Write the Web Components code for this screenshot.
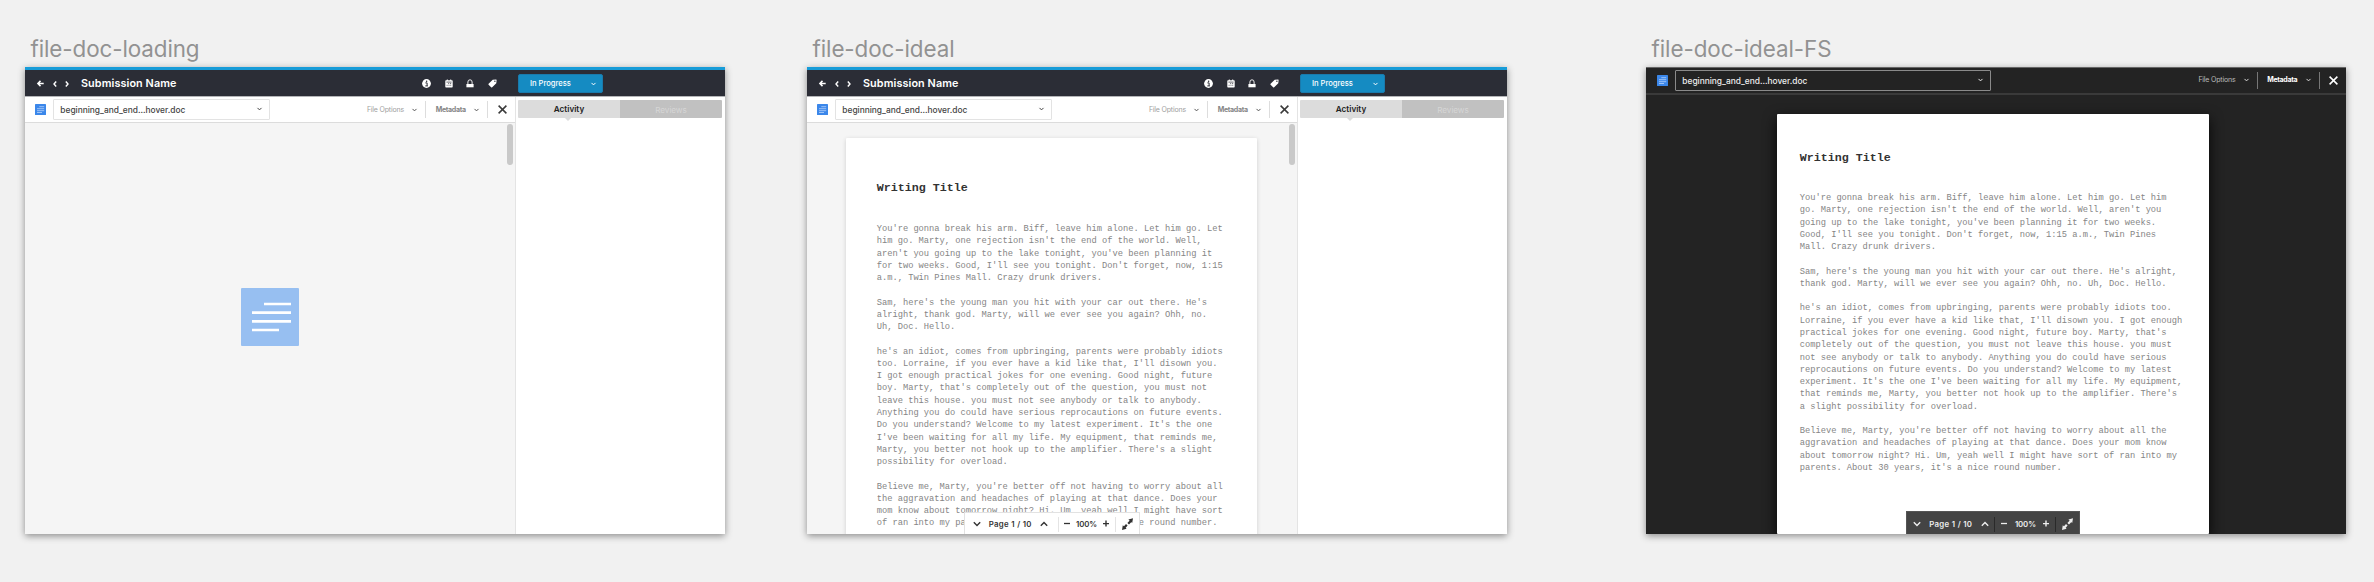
<!DOCTYPE html>
<html lang="en">
<head>
<meta charset="utf-8">
<title>File viewer artboards</title>
<style>
html,body{margin:0;height:100%}
body{background:#f1f1f1;overflow:hidden;font-family:Inter,"Liberation Sans",sans-serif}
</style>
</head>
<body>
<art-canvas>
  <art-board label="file-doc-loading" label-width="169"><file-view state="loading"></file-view></art-board>
  <art-board label="file-doc-ideal" label-width="142"><file-view state="ideal"></file-view></art-board>
  <art-board label="file-doc-ideal-FS" label-width="180"><fullscreen-view></fullscreen-view></art-board>
</art-canvas>
<script>
class Base extends HTMLElement {
  connectedCallback() {
    if (this.shadowRoot) return;
    this.attachShadow({mode: 'open'}).innerHTML = this.render();
    this.ready();
  }
  ready() {}
}

/* One line of text whose tracking is set so that it fills the given width. */
class FitText extends Base {
  render() {
    return `<style>:host{display:block;flex:none;white-space:pre;width:${this.getAttribute('w')}px}span{display:inline-block}</style><span><slot></slot></span>`;
  }
  ready() {
    const s = this.shadowRoot.querySelector('span');
    const n = this.textContent.length;
    const gap = (parseFloat(this.getAttribute('w')) - s.getBoundingClientRect().width) / n;
    s.style.letterSpacing = gap.toFixed(3) + 'px';
  }
}

const ICONS = {
  back: [7, 7, '<path d="M6.7 3.5H1M3.5 .9L.9 3.5l2.6 2.6" fill="none" stroke="currentColor" stroke-width="1.5"/>'],
  left: [4, 6, '<path d="M3.2 .5L1 3l2.2 2.5" fill="none" stroke="currentColor" stroke-width="1.4"/>'],
  right: [4, 6, '<path d="M.8 .5L3 3 .8 5.5" fill="none" stroke="currentColor" stroke-width="1.4"/>'],
  chev: [5, 4, '<path d="M.5 .9l2 2 2-2" fill="none" stroke="currentColor" stroke-width="1"/>'],
  down: [8, 6, '<path d="M.8 1.2L4 4.5l3.2-3.3" fill="none" stroke="currentColor" stroke-width="1.4"/>'],
  up: [8, 6, '<path d="M.8 4.8L4 1.5l3.2 3.3" fill="none" stroke="currentColor" stroke-width="1.4"/>'],
  close: [9, 9, '<path d="M.6 .6l7.8 7.8M8.4 .6L.6 8.4" fill="none" stroke="currentColor" stroke-width="1.5"/>'],
  minus: [6, 6, '<path d="M0 2.5h6" stroke="currentColor" stroke-width="1.3"/>'],
  plus: [6, 6, '<path d="M0 2.6h6M3 -.4v6" stroke="currentColor" stroke-width="1.4"/>'],
  info: [9, 9, '<circle cx="4.5" cy="4.5" r="4.4" fill="currentColor"/><path d="M3.4 3.9h1.7v2.9M3.3 6.9h2.6" fill="none" stroke="#2b2d36" stroke-width="1"/><circle cx="4.6" cy="2.3" r=".75" fill="#2b2d36"/>'],
  cal: [8, 9, '<path d="M1 1.3h.8V.4h1v.9h2.4V.4h1v.9H7q.7 0 .7.7v5.7q0 .8-.7.8H1q-.7 0-.7-.8V2q0-.7.7-.7z" fill="currentColor"/><path d="M1.4 3.1h5.2M3 4.6h.9M4.8 4.6h1.4M1.6 6.3h1M3.5 6.3h1M5.3 6.3h.9" stroke="#2b2d36" stroke-width=".7"/>'],
  lock: [8, 9, '<path d="M1.9 5V3a2 2.1 0 0 1 4.2 0v2" fill="none" stroke="currentColor" stroke-width=".9"/><path d="M.4 5h7.2v3.3H.4z" fill="currentColor"/>'],
  tag: [9, 9, '<path d="M4.7 .7L8.1 .4q.5 0 .5.5L8.3 4.2 4.2 8.3q-.6.5-1.1 0L.6 5.8q-.5-.5 0-1z" fill="currentColor"/><circle cx="6.9" cy="2.2" r=".7" fill="#2b2d36"/>'],
  expand: [11, 12, '<path d="M6.2 5.8l2.6-2.9M4.8 6.8L2.2 9.7" stroke="currentColor" stroke-width="2.2"/><path d="M6.4 1.6L11 .2 10.2 5zM4.6 10.7L0 11.9 .8 7.3z" fill="currentColor"/>'],
  doc: [11, 11, '<rect width="11" height="11" rx=".6" fill="#3b87ea"/><path d="M4.3 2.7h4.9M2 4.7h7.2M2 6.7h7.2M2 8.5h5" stroke="#a9cbf8" stroke-width=".9"/>'],
  bigdoc: [58, 58, '<rect width="58" height="58" rx="1" fill="#97bff1"/><path d="M23 16h27M11 24.7h39M11 33.3h39M11 42h27" stroke="#fff" stroke-width="2.7"/>']
};
class UiIcon extends Base {
  render() {
    const [w, h, body] = ICONS[this.getAttribute('name')];
    return `<style>:host{display:block;flex:none;width:${w}px;height:${h}px}svg{display:block;overflow:visible}</style><svg width="${w}" height="${h}" viewBox="0 0 ${w} ${h}">${body}</svg>`;
  }
}

class ArtCanvas extends Base {
  render() {
    return `<style>:host{display:grid;grid-template-columns:700px 700px 700px;column-gap:82px;padding:32px 0 0 25px}
      ::slotted(:nth-child(3)){margin-left:57px}</style><slot></slot>`;
  }
}
class ArtBoard extends Base {
  render() {
    return `<style>:host{display:block;width:700px}
      fit-text{height:35px;line-height:33px;padding-left:5.5px;font-size:22.4px;color:#929292}
      .frame{height:467px;box-shadow:0 2px 7px rgba(0,0,0,.42)}
      </style><fit-text w="${this.getAttribute('label-width')}">${this.getAttribute('label')}</fit-text><div class="frame"><slot></slot></div>`;
  }
}

class TopBar extends Base {
  render() {
    return `<style>:host{display:flex;align-items:center;box-sizing:border-box;height:30px;border-top:3px solid #189cd8;border-bottom:1px solid #b4b5b8;background:#2b2d36;color:#fff;padding:1px 0 0 11.5px}
      :host>*{flex:none}
      .title{margin-left:12px;font-size:10.8px;font-weight:600;line-height:14px}
      .icons{display:flex;gap:13.7px;margin-left:245.5px}
      .btn{box-sizing:border-box;display:flex;align-items:center;margin-left:20.9px;width:85px;height:19px;background:#158bc2;border:1px solid #1a7aac;border-radius:2px;padding:1px 0 0 11px;font-size:7.6px;font-weight:500;line-height:12px}
      .btn ui-icon{margin:-1px 0 0 20px}
      </style>
      <ui-icon name="back"></ui-icon><ui-icon name="left" style="margin-left:9px"></ui-icon><ui-icon name="right" style="margin-left:8.5px"></ui-icon>
      <fit-text class="title" w="95.5">Submission Name</fit-text>
      <div class="icons"><ui-icon name="info"></ui-icon><ui-icon name="cal"></ui-icon><ui-icon name="lock"></ui-icon><ui-icon name="tag"></ui-icon></div>
      <div class="btn"><fit-text w="41">In Progress</fit-text><ui-icon name="chev"></ui-icon></div>`;
  }
}

class FileBar extends Base {
  render() {
    return `<style>:host{display:flex;align-items:center;box-sizing:border-box;height:26px;padding:0 8.5px 0 10px;background:#fff;border-bottom:1px solid #dcdcdc;color:#555}
      :host([dark]){height:27px;padding:0 8px 1px 11px;background:#232323;border-bottom:2px solid #3a3a3a;color:#ddd}
      .select{flex:none;box-sizing:border-box;display:flex;justify-content:space-between;align-items:center;margin-left:7.3px;width:217px;height:21px;border:1px solid #e3e3e3;border-radius:1px;padding:1px 7px 0 6px;color:#444;font-size:8.4px;font-weight:500;line-height:12px}
      .select ui-icon{margin-top:-2px}
      :host([dark]) .select{width:315.5px;border-color:#8a8a8a;color:#eee}
      .tools{display:flex;align-items:center;margin-left:auto;font-size:7px;line-height:10px}
      .fo{color:#a0a0a0}.md{color:#858585;font-weight:700}
      :host([dark]) .fo{color:#bbb}:host([dark]) .md{color:#fff}
      .rule{width:1px;height:17px;background:#ddd;margin:0 9.3px 0 8px}
      :host([dark]) .rule{background:#777}
      .tools>ui-icon[name=chev]{margin-left:8.5px}
      .x{color:#3a3a3a}:host([dark]) .x{color:#fff}
      </style>
      <ui-icon name="doc"></ui-icon>
      <div class="select"><fit-text w="125">beginning_and_end...hover.doc</fit-text><ui-icon name="chev"></ui-icon></div>
      <div class="tools"><fit-text class="fo" w="37">File Options</fit-text><ui-icon name="chev"></ui-icon><span class="rule"></span>
      <fit-text class="md" w="30">Metadata</fit-text><ui-icon name="chev"></ui-icon><span class="rule"></span><ui-icon class="x" name="close"></ui-icon></div>`;
  }
}

class SidePanel extends Base {
  render() {
    return `<style>:host{display:block;box-sizing:border-box;background:#fff;border-left:1px solid #e4e4e4;padding:3px 3px 0 2px}
      .tabs{display:grid;grid-template-columns:1fr 1fr;height:18px}
      .tab{display:flex;flex-direction:column;align-items:center;font-size:8.2px;line-height:19px;height:18px}
      .tab fit-text{height:18px}
      .on{background:#dcdcdc;color:#222;font-weight:600;border-radius:1px 0 0 1px}
      .off{background:#c1c1c1;color:#d6d6d6;line-height:21px;border-radius:0 1px 1px 0}
      .on::after{content:"";border:3px solid transparent;border-top-color:#dcdcdc;border-bottom:0;margin-left:-2px}
      </style><div class="tabs"><div class="tab on"><fit-text w="30.5">Activity</fit-text></div><div class="tab off"><fit-text w="31.5">Reviews</fit-text></div></div>`;
  }
}

class PagerBar extends Base {
  render() {
    return `<style>:host{display:flex;align-items:center;box-sizing:border-box;width:176px;height:22px;background:#fff;border:1px solid #e2e2e2;border-width:1px 1px 0;color:#333;font-size:7.8px;font-weight:600;line-height:12px;padding:1px 0 0 8px}
      :host([dark]){width:174px;height:23px;background:#444;border-color:#555;color:#eee;padding:2px 0 0 6px}
      .rule{flex:none;width:1px;height:15px;background:#e4e4e4;margin:0 5.5px 0 9.5px}
      :host([dark]) .rule{background:#2a2a2a;margin:0 5.5px 0 5.5px}
      .p{margin:0 8.3px}.z{margin:0 6.2px 0 6px}:host([dark]) .z{margin:0 7.3px 0 8.3px}
      .rule.b,:host([dark]) .rule.b{margin:0 5.5px 0 6px}
      </style><ui-icon name="down"></ui-icon><fit-text class="p" w="43">Page 1 / 10</fit-text><ui-icon name="up"></ui-icon><span class="rule"></span>
      <ui-icon name="minus"></ui-icon><fit-text class="z" w="21">100%</fit-text><ui-icon name="plus"></ui-icon><span class="rule b"></span><ui-icon name="expand"></ui-icon>`;
  }
}

class DocPage extends Base {
  render() {
    return `<style>:host{display:block;box-sizing:border-box;background:#fff;width:411px;height:420px;padding:43px 0 0 30.7px;box-shadow:0 1px 4px rgba(0,0,0,.16);border-radius:1px;font-family:"Liberation Mono","Courier New",monospace}
      :host([wide]){width:432px;padding:36.5px 0 0 22.7px;box-shadow:0 5px 14px rgba(0,0,0,.85)}
      h1{margin:0;font-size:11.67px;line-height:14px;font-weight:700;color:#333;white-space:pre}
      p{margin:0 0 12.27px;font-size:8.74px;line-height:12.27px;color:#858585;white-space:pre}
      h1+p{margin-top:28px}
      :host([wide]) h1+p{margin-top:27.6px}
      </style><h1>Writing Title</h1>${TEXT[this.getAttribute('text')].map(p => `<p>${p}</p>`).join('')}`;
  }
}
const TEXT = {
  narrow: [
`You're gonna break his arm. Biff, leave him alone. Let him go. Let
him go. Marty, one rejection isn't the end of the world. Well,
aren't you going up to the lake tonight, you've been planning it
for two weeks. Good, I'll see you tonight. Don't forget, now, 1:15
a.m., Twin Pines Mall. Crazy drunk drivers.`,
`Sam, here's the young man you hit with your car out there. He's
alright, thank god. Marty, will we ever see you again? Ohh, no.
Uh, Doc. Hello.`,
`he's an idiot, comes from upbringing, parents were probably idiots
too. Lorraine, if you ever have a kid like that, I'll disown you.
I got enough practical jokes for one evening. Good night, future
boy. Marty, that's completely out of the question, you must not
leave this house. you must not see anybody or talk to anybody.
Anything you do could have serious reprocautions on future events.
Do you understand? Welcome to my latest experiment. It's the one
I've been waiting for all my life. My equipment, that reminds me,
Marty, you better not hook up to the amplifier. There's a slight
possibility for overload.`,
`Believe me, Marty, you're better off not having to worry about all
the aggravation and headaches of playing at that dance. Does your
mom know about tomorrow night? Hi. Um, yeah well I might have sort
of ran into my parents. About 30 years, it's a nice round number.`],
  wide: [
`You're gonna break his arm. Biff, leave him alone. Let him go. Let him
go. Marty, one rejection isn't the end of the world. Well, aren't you
going up to the lake tonight, you've been planning it for two weeks.
Good, I'll see you tonight. Don't forget, now, 1:15 a.m., Twin Pines
Mall. Crazy drunk drivers.`,
`Sam, here's the young man you hit with your car out there. He's alright,
thank god. Marty, will we ever see you again? Ohh, no. Uh, Doc. Hello.`,
`he's an idiot, comes from upbringing, parents were probably idiots too.
Lorraine, if you ever have a kid like that, I'll disown you. I got enough
practical jokes for one evening. Good night, future boy. Marty, that's
completely out of the question, you must not leave this house. you must
not see anybody or talk to anybody. Anything you do could have serious
reprocautions on future events. Do you understand? Welcome to my latest
experiment. It's the one I've been waiting for all my life. My equipment,
that reminds me, Marty, you better not hook up to the amplifier. There's
a slight possibility for overload.`,
`Believe me, Marty, you're better off not having to worry about all the
aggravation and headaches of playing at that dance. Does your mom know
about tomorrow night? Hi. Um, yeah well I might have sort of ran into my
parents. About 30 years, it's a nice round number.`]
};

class FileView extends Base {
  render() {
    const loading = this.getAttribute('state') === 'loading';
    return `<style>:host{display:grid;grid-template-rows:30px 1fr;height:467px;background:#fff;overflow:hidden}
      .body{display:grid;grid-template-columns:490px 210px;min-height:0}
      .main{display:grid;grid-template-rows:26px 411px;min-height:0}
      .stage{position:relative;background:#f5f5f5;overflow:hidden}
      doc-page{margin:15px 0 0 39px}
      .stage>ui-icon{margin:165px 0 0 216px}
      .thumb{position:absolute;right:2px;top:1px;width:6px;height:41px;border-radius:3px;background:#c9c9c9}
      pager-bar{position:absolute;left:156.5px;bottom:0}
      </style><top-bar></top-bar><div class="body"><div class="main"><file-bar></file-bar><div class="stage">
      ${loading ? '<ui-icon name="bigdoc"></ui-icon>' : '<doc-page text="narrow"></doc-page><pager-bar></pager-bar>'}
      <div class="thumb"></div></div></div><side-panel></side-panel></div>`;
  }
}
class FullscreenView extends Base {
  render() {
    return `<style>:host{display:grid;grid-template-rows:27px 1fr;box-sizing:border-box;height:467px;background:#232323;border-top:1px solid #666;overflow:hidden}
      .stage{position:relative;overflow:hidden}
      doc-page{margin:19px 0 0 131px}
      pager-bar{position:absolute;left:260px;bottom:0}
      </style><file-bar dark></file-bar><div class="stage"><doc-page wide text="wide"></doc-page><pager-bar dark></pager-bar></div>`;
  }
}

Object.entries({
  'ui-icon': UiIcon, 'fit-text': FitText, 'art-canvas': ArtCanvas, 'art-board': ArtBoard,
  'top-bar': TopBar, 'file-bar': FileBar, 'side-panel': SidePanel, 'pager-bar': PagerBar,
  'doc-page': DocPage, 'file-view': FileView, 'fullscreen-view': FullscreenView
}).forEach(([name, cls]) => customElements.define(name, cls));
</script>
</body>
</html>
